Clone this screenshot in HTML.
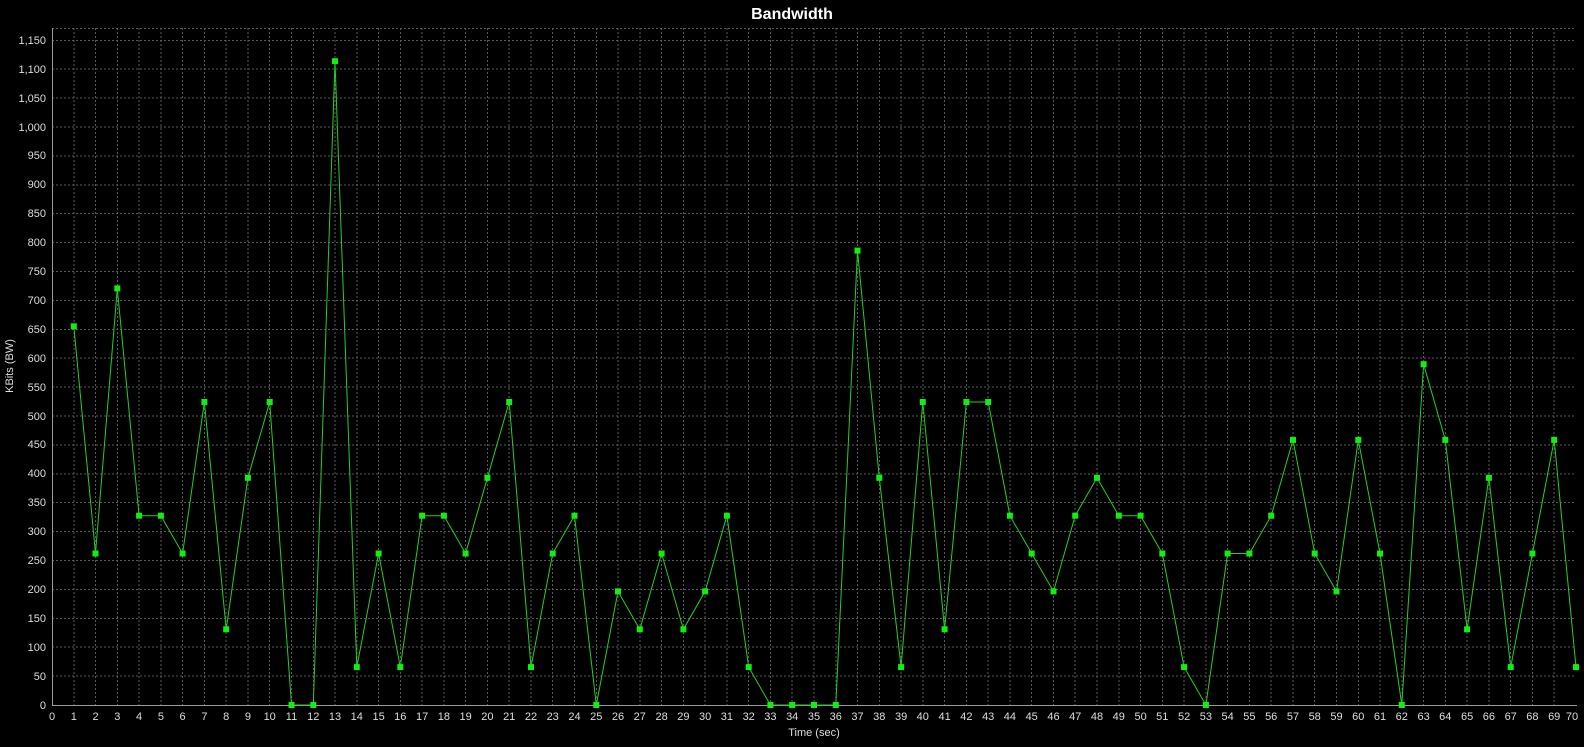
<!DOCTYPE html>
<html><head><meta charset="utf-8"><style>
html,body{margin:0;padding:0;background:#000;}
svg{display:block;font-family:"Liberation Sans",sans-serif;}
</style></head><body>
<svg width="1584" height="747" viewBox="0 0 1584 747" xmlns="http://www.w3.org/2000/svg">
<rect width="1584" height="747" fill="#000"/>
<text x="792" y="19" fill="#fff" font-size="16" font-weight="bold" text-anchor="middle">Bandwidth</text>
<g stroke="#5a5a5a" stroke-width="1" stroke-dasharray="2,2" shape-rendering="crispEdges">
<path d="M52 676.1H1576M52 647.2H1576M52 618.3H1576M52 589.4H1576M52 560.5H1576M52 531.6H1576M52 502.7H1576M52 473.8H1576M52 444.9H1576M52 416H1576M52 387.1H1576M52 358.2H1576M52 329.3H1576M52 300.4H1576M52 271.5H1576M52 242.6H1576M52 213.7H1576M52 184.8H1576M52 155.9H1576M52 127H1576M52 98.1H1576M52 69.2H1576M52 40.3H1576"/>
<path d="M73.8 28V705M95.5 28V705M117.3 28V705M139.1 28V705M160.9 28V705M182.6 28V705M204.4 28V705M226.2 28V705M247.9 28V705M269.7 28V705M291.5 28V705M313.3 28V705M335 28V705M356.8 28V705M378.6 28V705M400.3 28V705M422.1 28V705M443.9 28V705M465.6 28V705M487.4 28V705M509.2 28V705M531 28V705M552.7 28V705M574.5 28V705M596.3 28V705M618 28V705M639.8 28V705M661.6 28V705M683.4 28V705M705.1 28V705M726.9 28V705M748.7 28V705M770.4 28V705M792.2 28V705M814 28V705M835.8 28V705M857.5 28V705M879.3 28V705M901.1 28V705M922.8 28V705M944.6 28V705M966.4 28V705M988.2 28V705M1009.9 28V705M1031.7 28V705M1053.5 28V705M1075.2 28V705M1097 28V705M1118.8 28V705M1140.6 28V705M1162.3 28V705M1184.1 28V705M1205.9 28V705M1227.6 28V705M1249.4 28V705M1271.2 28V705M1293 28V705M1314.7 28V705M1336.5 28V705M1358.3 28V705M1380 28V705M1401.8 28V705M1423.6 28V705M1445.3 28V705M1467.1 28V705M1488.9 28V705M1510.7 28V705M1532.4 28V705M1554.2 28V705"/>
<path d="M52 28.5H1576"/>
</g>
<g stroke="#9a9a9a" stroke-width="1" shape-rendering="crispEdges">
<path d="M52.5 28V706M52 705.5H1577"/>
</g>
<g fill="#ddd" font-size="11" text-anchor="end">
<text x="46" y="709">0</text><text x="46" y="680">50</text><text x="46" y="651">100</text><text x="46" y="622">150</text><text x="46" y="593">200</text><text x="46" y="564">250</text><text x="46" y="535">300</text><text x="46" y="506">350</text><text x="46" y="477">400</text><text x="46" y="448">450</text><text x="46" y="420">500</text><text x="46" y="391">550</text><text x="46" y="362">600</text><text x="46" y="333">650</text><text x="46" y="304">700</text><text x="46" y="275">750</text><text x="46" y="246">800</text><text x="46" y="217">850</text><text x="46" y="188">900</text><text x="46" y="159">950</text><text x="46" y="131">1,000</text><text x="46" y="102">1,050</text><text x="46" y="73">1,100</text><text x="46" y="44">1,150</text>
</g>
<g fill="#ddd" font-size="11" text-anchor="middle">
<text x="52" y="720">0</text><text x="73.8" y="720">1</text><text x="95.5" y="720">2</text><text x="117.3" y="720">3</text><text x="139.1" y="720">4</text><text x="160.9" y="720">5</text><text x="182.6" y="720">6</text><text x="204.4" y="720">7</text><text x="226.2" y="720">8</text><text x="247.9" y="720">9</text><text x="269.7" y="720">10</text><text x="291.5" y="720">11</text><text x="313.3" y="720">12</text><text x="335" y="720">13</text><text x="356.8" y="720">14</text><text x="378.6" y="720">15</text><text x="400.3" y="720">16</text><text x="422.1" y="720">17</text><text x="443.9" y="720">18</text><text x="465.6" y="720">19</text><text x="487.4" y="720">20</text><text x="509.2" y="720">21</text><text x="531" y="720">22</text><text x="552.7" y="720">23</text><text x="574.5" y="720">24</text><text x="596.3" y="720">25</text><text x="618" y="720">26</text><text x="639.8" y="720">27</text><text x="661.6" y="720">28</text><text x="683.4" y="720">29</text><text x="705.1" y="720">30</text><text x="726.9" y="720">31</text><text x="748.7" y="720">32</text><text x="770.4" y="720">33</text><text x="792.2" y="720">34</text><text x="814" y="720">35</text><text x="835.8" y="720">36</text><text x="857.5" y="720">37</text><text x="879.3" y="720">38</text><text x="901.1" y="720">39</text><text x="922.8" y="720">40</text><text x="944.6" y="720">41</text><text x="966.4" y="720">42</text><text x="988.2" y="720">43</text><text x="1009.9" y="720">44</text><text x="1031.7" y="720">45</text><text x="1053.5" y="720">46</text><text x="1075.2" y="720">47</text><text x="1097" y="720">48</text><text x="1118.8" y="720">49</text><text x="1140.6" y="720">50</text><text x="1162.3" y="720">51</text><text x="1184.1" y="720">52</text><text x="1205.9" y="720">53</text><text x="1227.6" y="720">54</text><text x="1249.4" y="720">55</text><text x="1271.2" y="720">56</text><text x="1293" y="720">57</text><text x="1314.7" y="720">58</text><text x="1336.5" y="720">59</text><text x="1358.3" y="720">60</text><text x="1380" y="720">61</text><text x="1401.8" y="720">62</text><text x="1423.6" y="720">63</text><text x="1445.3" y="720">64</text><text x="1467.1" y="720">65</text><text x="1488.9" y="720">66</text><text x="1510.7" y="720">67</text><text x="1532.4" y="720">68</text><text x="1554.2" y="720">69</text><text x="1572" y="720">70</text>
</g>
<text x="814" y="736" fill="#ddd" font-size="11" text-anchor="middle">Time (sec)</text>
<text transform="translate(13,366) rotate(-90)" fill="#ddd" font-size="11" text-anchor="middle">KBits (BW)</text>
<polyline fill="none" stroke="#22d022" stroke-width="1" points="73.8,326.3 95.5,553.5 117.3,288.4 139.1,515.7 160.9,515.7 182.6,553.5 204.4,402 226.2,629.3 247.9,477.8 269.7,402 291.5,705 313.3,705 335,61.2 356.8,667.1 378.6,553.5 400.3,667.1 422.1,515.7 443.9,515.7 465.6,553.5 487.4,477.8 509.2,402 531,667.1 552.7,553.5 574.5,515.7 596.3,705 618,591.4 639.8,629.3 661.6,553.5 683.4,629.3 705.1,591.4 726.9,515.7 748.7,667.1 770.4,705 792.2,705 814,705 835.8,705 857.5,250.6 879.3,477.8 901.1,667.1 922.8,402 944.6,629.3 966.4,402 988.2,402 1009.9,515.7 1031.7,553.5 1053.5,591.4 1075.2,515.7 1097,477.8 1118.8,515.7 1140.6,515.7 1162.3,553.5 1184.1,667.1 1205.9,705 1227.6,553.5 1249.4,553.5 1271.2,515.7 1293,439.9 1314.7,553.5 1336.5,591.4 1358.3,439.9 1380,553.5 1401.8,705 1423.6,364.2 1445.3,439.9 1467.1,629.3 1488.9,477.8 1510.7,667.1 1532.4,553.5 1554.2,439.9 1576,667.1"/>
<g fill="#11ee11">
<rect x="70.8" y="323.3" width="6" height="6"/><rect x="92.5" y="550.5" width="6" height="6"/><rect x="114.3" y="285.4" width="6" height="6"/><rect x="136.1" y="512.7" width="6" height="6"/><rect x="157.9" y="512.7" width="6" height="6"/><rect x="179.6" y="550.5" width="6" height="6"/><rect x="201.4" y="399" width="6" height="6"/><rect x="223.2" y="626.3" width="6" height="6"/><rect x="244.9" y="474.8" width="6" height="6"/><rect x="266.7" y="399" width="6" height="6"/><rect x="288.5" y="702" width="6" height="6"/><rect x="310.3" y="702" width="6" height="6"/><rect x="332" y="58.2" width="6" height="6"/><rect x="353.8" y="664.1" width="6" height="6"/><rect x="375.6" y="550.5" width="6" height="6"/><rect x="397.3" y="664.1" width="6" height="6"/><rect x="419.1" y="512.7" width="6" height="6"/><rect x="440.9" y="512.7" width="6" height="6"/><rect x="462.6" y="550.5" width="6" height="6"/><rect x="484.4" y="474.8" width="6" height="6"/><rect x="506.2" y="399" width="6" height="6"/><rect x="528" y="664.1" width="6" height="6"/><rect x="549.7" y="550.5" width="6" height="6"/><rect x="571.5" y="512.7" width="6" height="6"/><rect x="593.3" y="702" width="6" height="6"/><rect x="615" y="588.4" width="6" height="6"/><rect x="636.8" y="626.3" width="6" height="6"/><rect x="658.6" y="550.5" width="6" height="6"/><rect x="680.4" y="626.3" width="6" height="6"/><rect x="702.1" y="588.4" width="6" height="6"/><rect x="723.9" y="512.7" width="6" height="6"/><rect x="745.7" y="664.1" width="6" height="6"/><rect x="767.4" y="702" width="6" height="6"/><rect x="789.2" y="702" width="6" height="6"/><rect x="811" y="702" width="6" height="6"/><rect x="832.8" y="702" width="6" height="6"/><rect x="854.5" y="247.6" width="6" height="6"/><rect x="876.3" y="474.8" width="6" height="6"/><rect x="898.1" y="664.1" width="6" height="6"/><rect x="919.8" y="399" width="6" height="6"/><rect x="941.6" y="626.3" width="6" height="6"/><rect x="963.4" y="399" width="6" height="6"/><rect x="985.2" y="399" width="6" height="6"/><rect x="1006.9" y="512.7" width="6" height="6"/><rect x="1028.7" y="550.5" width="6" height="6"/><rect x="1050.5" y="588.4" width="6" height="6"/><rect x="1072.2" y="512.7" width="6" height="6"/><rect x="1094" y="474.8" width="6" height="6"/><rect x="1115.8" y="512.7" width="6" height="6"/><rect x="1137.6" y="512.7" width="6" height="6"/><rect x="1159.3" y="550.5" width="6" height="6"/><rect x="1181.1" y="664.1" width="6" height="6"/><rect x="1202.9" y="702" width="6" height="6"/><rect x="1224.6" y="550.5" width="6" height="6"/><rect x="1246.4" y="550.5" width="6" height="6"/><rect x="1268.2" y="512.7" width="6" height="6"/><rect x="1290" y="436.9" width="6" height="6"/><rect x="1311.7" y="550.5" width="6" height="6"/><rect x="1333.5" y="588.4" width="6" height="6"/><rect x="1355.3" y="436.9" width="6" height="6"/><rect x="1377" y="550.5" width="6" height="6"/><rect x="1398.8" y="702" width="6" height="6"/><rect x="1420.6" y="361.2" width="6" height="6"/><rect x="1442.3" y="436.9" width="6" height="6"/><rect x="1464.1" y="626.3" width="6" height="6"/><rect x="1485.9" y="474.8" width="6" height="6"/><rect x="1507.7" y="664.1" width="6" height="6"/><rect x="1529.4" y="550.5" width="6" height="6"/><rect x="1551.2" y="436.9" width="6" height="6"/><rect x="1573" y="664.1" width="6" height="6"/>
</g>
</svg>
</body></html>
